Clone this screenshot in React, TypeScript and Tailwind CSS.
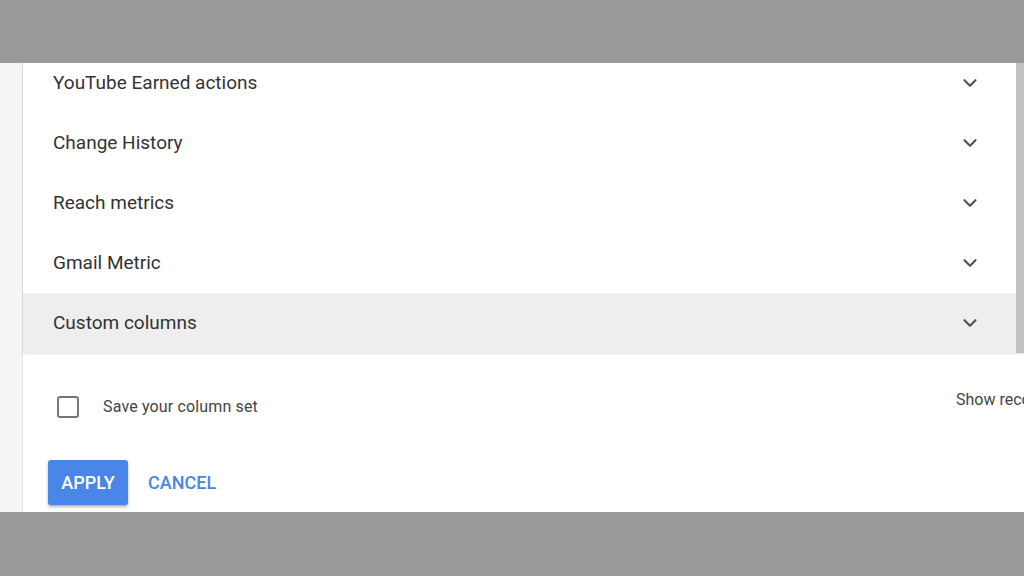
import { ChevronDown } from 'lucide-react'

const groups = [
  'YouTube Earned actions',
  'Change History',
  'Reach metrics',
  'Gmail Metric',
  'Custom columns',
]

function GroupRow({ label, active }: { label: string; active?: boolean }) {
  return (
    <div
      className={`h-[60px] flex items-center justify-between pl-[30px] pr-[35px] ${
        active ? 'bg-[#eeeeee]' : 'bg-white'
      }`}
    >
      <span className="text-[19px] text-[#333333]">{label}</span>
      <ChevronDown className="w-[22px] h-[22px] text-[#555555]" strokeWidth={2.4} />
    </div>
  )
}

export default function App() {
  return (
    <div
      className="w-[1024px] h-[576px] flex flex-col bg-[#999999] overflow-hidden"
      style={{ fontFamily: 'Roboto, "Liberation Sans", sans-serif' }}
    >
      {/* top letterbox */}
      <div className="h-[63px] shrink-0 bg-[#999999]" />

      {/* Content */}
      <div className="h-[449px] shrink-0 flex bg-white">
        <div className="w-[23px] shrink-0 bg-[#f5f5f5] border-r border-[#e3e3e3]" />

        <div className="flex-1 flex flex-col min-w-0">
          {/* column groups list */}
          <div className="h-[290px] shrink-0 flex shadow-[0_1px_2px_rgba(0,0,0,0.12)] relative">
            <div className="flex-1 overflow-hidden">
              <div className="-mt-[10px]">
                {groups.map((g) => (
                  <GroupRow key={g} label={g} active={g === 'Custom columns'} />
                ))}
              </div>
            </div>
            <div className="w-[8px] shrink-0 bg-[#c2c2c2]" />
          </div>

          {/* save + actions */}
          <div className="flex-1 flex flex-col">
            <div className="flex items-start justify-between pt-[35px]">
              <label className="flex items-center gap-[24px] pl-[34px] pt-[7px]">
                <span className="w-[22px] h-[22px] rounded-[3px] border-2 border-[#777777]" />
                <span className="text-[16px] tracking-[0.15px] text-[#444444]">Save your column set</span>
              </label>
              <div className="w-[68px] overflow-hidden whitespace-nowrap text-[16px] text-[#444444]">
                Show recommended columns
              </div>
            </div>

            <div className="flex items-center gap-[20px] pl-[25px] mt-[41px]">
              <button className="w-[80px] h-[45px] rounded-[3px] bg-[#4a86e8] text-white text-[18px] font-medium shadow-[0_2px_3px_rgba(0,0,0,0.3)]">
                APPLY
              </button>
              <button className="text-[18px] font-medium text-[#4a86e8]">CANCEL</button>
            </div>
          </div>
        </div>
      </div>

      {/* bottom letterbox */}
      <div className="flex-1 bg-[#999999]" />
    </div>
  )
}
